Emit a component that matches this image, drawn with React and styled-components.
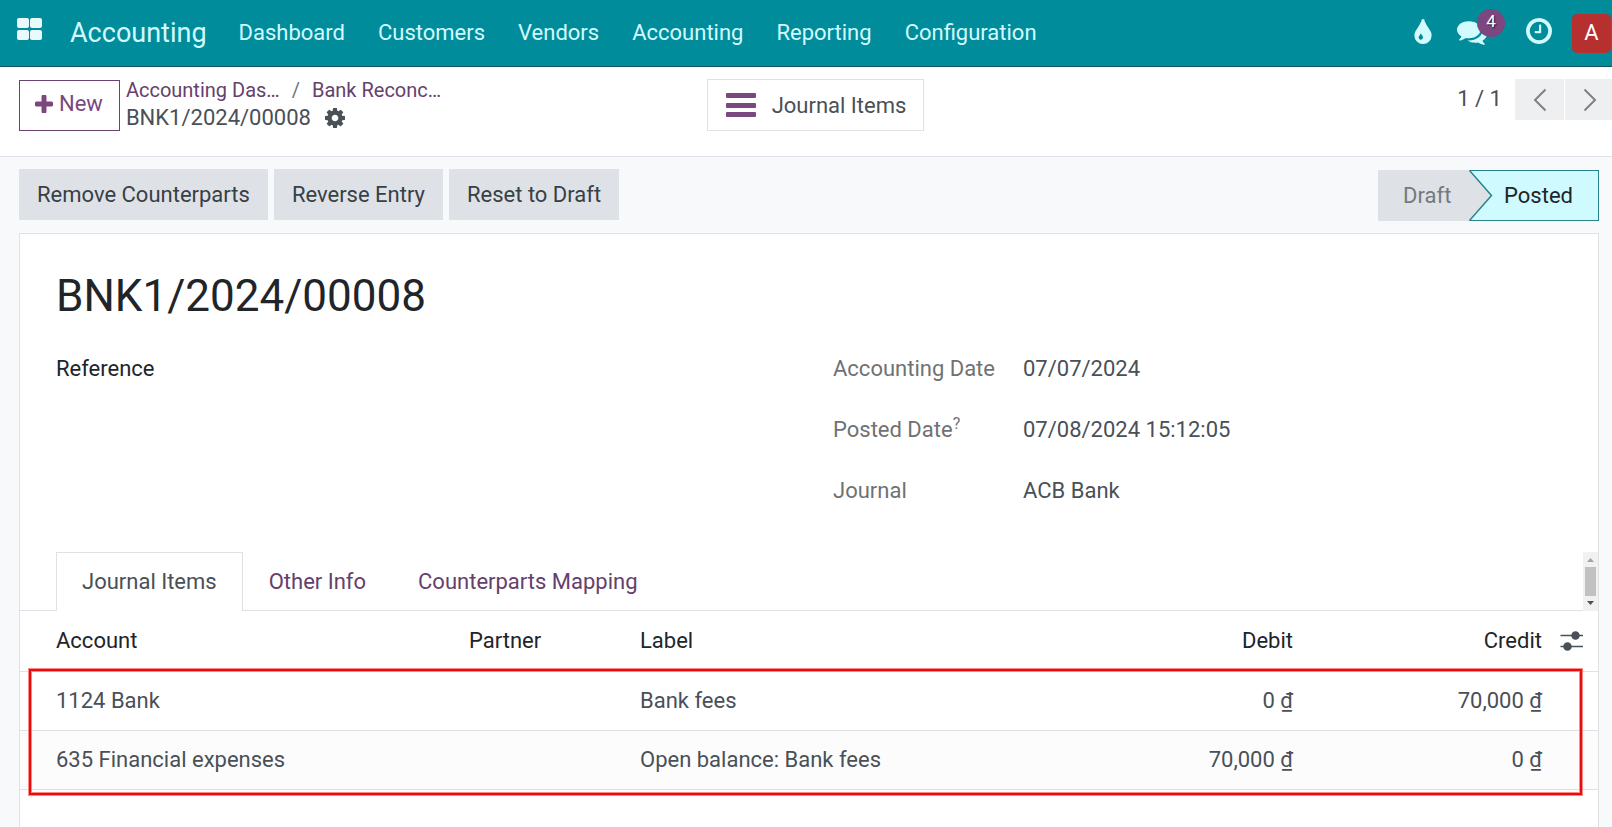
import React from 'react';
import styled, { createGlobalStyle } from 'styled-components';

const color = {
  teal: '#008c9b',
  tealDark: '#17525c',
  navText: '#d2fbff',
  purple: '#7c467f',
  link: '#66406c',
  text: '#495057',
  strong: '#212529',
  muted: '#6f7274',
  line: '#dee2e6',
  grey: '#dee2e6',
  page: '#f8f9fb',
};

const GlobalStyle = createGlobalStyle`
  *, *::before, *::after { box-sizing: border-box; }
  body {
    margin: 0;
    background: ${color.page};
    color: ${color.text};
    font-family: Roboto, "Liberation Sans", sans-serif;
    font-size: 22px;
    line-height: 26px;
  }
  button { font: inherit; color: inherit; cursor: pointer; border-radius: 0; }
  a { text-decoration: none; }
`;

const Page = styled.div`
  min-height: 100vh;
  display: flex;
  flex-direction: column;
  overflow-x: clip;
`;

/* Navigation bar */
const NavBar = styled.header`
  height: 67px;
  display: flex;
  align-items: center;
  padding-left: 16px;
  background: ${color.teal};
  border-bottom: 1px solid ${color.tealDark};
  color: ${color.navText};
`;

const IconButton = styled.button`
  position: relative;
  display: flex;
  padding: 0;
  border: 0;
  background: none;
  color: ${color.navText};
`;

const AppsButton = styled(IconButton)`
  margin-right: 27px;
  padding-bottom: 8px;
`;

const Brand = styled.a`
  font-size: 27px;
  line-height: 32px;
  color: inherit;
  margin-right: 32px;
`;

const Menu = styled.nav`
  display: flex;
  gap: 33px;
`;

const MenuLink = styled.a`
  color: inherit;
`;

const Systray = styled.div`
  margin-left: auto;
  display: flex;
  align-items: center;
  gap: 25px;
`;

const RaisedIconButton = styled(IconButton)`
  padding-bottom: 4px;
`;

const ActivityButton = styled(RaisedIconButton)`
  margin-left: 14px;
`;

const Badge = styled.span`
  position: absolute;
  top: -12px;
  left: 20px;
  width: 28px;
  height: 28px;
  border-radius: 50%;
  background: ${color.purple};
  color: #fff;
  font-size: 17px;
  line-height: 24px;
  text-align: center;
  text-shadow: 1px 1px 1px #2b1a2c;
`;

const Avatar = styled.button`
  width: 39px;
  height: 39px;
  margin-left: -5px;
  margin-right: 1px;
  padding: 0;
  border: 0;
  && { border-radius: 5px; }
  background: #b5302f;
  color: #fff;
`;

/* Control panel */
const ControlPanel = styled.div`
  height: 90px;
  display: grid;
  grid-template-columns: 1fr auto 1fr;
  align-items: start;
  padding: 12px 0 0 19px;
  background: #fff;
  border-bottom: 1px solid ${color.line};
`;

const PanelLeft = styled.div`
  display: flex;
  gap: 6px;
`;

const NewButton = styled.button`
  height: 51px;
  margin-top: 1px;
  padding: 0 16px 3px 15px;
  display: flex;
  align-items: center;
  gap: 6px;
  border: 1px solid #6c4070;
  background: #fff;
  color: ${color.purple};
`;

const Crumbs = styled.nav`
  display: flex;
  flex-direction: column;
`;

const Trail = styled.div`
  display: flex;
  gap: 12px;
  font-size: 20px;
  line-height: 22px;
  color: #6c757d;
`;

const Crumb = styled.a`
  color: ${color.link};
`;

const Current = styled.div`
  display: flex;
  align-items: center;
  gap: 14px;
  line-height: 33px;
`;

const StatButton = styled.button`
  height: 52px;
  padding: 1px 17px 0 18px;
  display: flex;
  align-items: center;
  gap: 16px;
  border: 1px solid ${color.line};
  background: #fff;
`;

const Pager = styled.div`
  display: flex;
  justify-content: flex-end;
  align-items: center;
  gap: 1px;
`;

const PagerCount = styled.span`
  margin-right: 12px;
  padding-bottom: 1px;
`;

const PagerButton = styled.button`
  width: ${(p) => p.$width}px;
  height: 41px;
  display: flex;
  align-items: center;
  padding: 0 0 0 18px;
  border: 0;
  background: #eeeff1;
  color: #7f8184;
`;

/* Form view */
const ActionBar = styled.div`
  display: flex;
  justify-content: space-between;
  padding: 12px 13px 12px 19px;
`;

const Actions = styled.div`
  display: flex;
  gap: 6px;
`;

const ActionButton = styled.button`
  height: 51px;
  padding: 0 18px;
  border: 0;
  background: ${color.grey};
  color: #374046;
`;

const StatusBar = styled.div`
  display: flex;
  height: 51px;
  margin-top: 1px;
`;

const StatusDraft = styled.button`
  width: 91px;
  padding: 0 0 0 25px;
  border: 0;
  text-align: left;
  background: ${color.grey};
  color: #74797e;
`;

const StatusPosted = styled.button`
  display: flex;
  align-items: center;
  padding: 0 25px 0 0;
  border: solid #27848c;
  border-width: 1px 1px 1px 0;
  background: #cffaff;
  color: ${color.strong};
`;

const Arrow = styled.svg`
  flex: none;
  margin: -1px 11px -1px 0;
`;

const Sheet = styled.main`
  flex: 1;
  margin: 0 13px 0 19px;
  border: 1px solid ${color.line};
  border-bottom: 0;
  background: #fff;
`;

const Title = styled.h1`
  margin: 36px 36px 16px;
  font-size: 44px;
  line-height: 52px;
  font-weight: 400;
  color: ${color.strong};
`;

const FieldColumns = styled.div`
  display: grid;
  grid-template-columns: 1fr 1fr;
  gap: 48px;
  margin: 0 36px 31px;
`;

const FieldGroup = styled.dl`
  margin: 0;
  display: grid;
  grid-template-columns: 190px 1fr;
  grid-auto-rows: 61px;
  align-items: center;
  align-content: start;
`;

const FieldLabel = styled.dt`
  color: ${(p) => (p.$strong ? color.strong : color.muted)};
`;

const FieldValue = styled.dd`
  margin: 0;
`;

const Help = styled.sup`
  font-size: 16px;
  line-height: 0;
`;

const TabBar = styled.div`
  display: flex;
  height: 59px;
  padding-left: 36px;
  box-shadow: inset 0 -1px ${color.line};
`;

const Tab = styled.button`
  padding: 0 25px;
  border: 1px solid ${(p) => (p.$active ? color.line : 'transparent')};
  border-bottom: 0;
  background: ${(p) => (p.$active ? '#fff' : 'transparent')};
  color: ${(p) => (p.$active ? color.text : color.link)};
`;

const ScrollTrack = styled.div`
  width: 15px;
  margin-left: auto;
  display: flex;
  flex-direction: column;
  align-items: center;
  background: #f1f1f1;
`;

const ScrollThumb = styled.div`
  width: 11px;
  height: 29px;
  background: #c1c1c1;
`;

const TableArea = styled.div`
  position: relative;
`;

const Table = styled.table`
  width: 100%;
  table-layout: fixed;
  border-collapse: separate;
  border-spacing: 0;
`;

const Col = styled.col`
  width: ${(p) => (p.$width ? `${p.$width}px` : 'auto')};
`;

const Th = styled.th`
  height: 61px;
  padding: 0 8px;
  border-bottom: 1px solid ${color.line};
  font-weight: 400;
  color: ${color.strong};
  text-align: ${(p) => (p.$number ? 'right' : 'left')};
  &:first-child { padding-left: 36px; }
`;

const Td = styled.td`
  height: 59px;
  padding: 0 8px;
  border-bottom: 1px solid ${color.line};
  text-align: ${(p) => (p.$number ? 'right' : 'left')};
  &:first-child { padding-left: 36px; }
  tr:nth-child(even) > & { background: #fcfcfc; }
`;

const OptionsButton = styled(IconButton)`
  color: ${color.text};
`;

/* Frame that calls out the journal lines */
const Highlight = styled.div`
  position: absolute;
  top: 58px;
  right: 16px;
  bottom: -5px;
  left: 9px;
  border: 2px solid #e80c0c;
  box-shadow: 0 0 0 1px #ff8a8a, inset 0 0 0 1px #ff8a8a;
  pointer-events: none;
`;

const glyphs = {
  plus: 'M1600 736v192q0 40-28 68t-68 28h-416v416q0 40-28 68t-68 28h-192q-40 0-68-28t-28-68v-416h-416q-40 0-68-28t-28-68v-192q0-40 28-68t68-28h416v-416q0-40 28-68t68-28h192q40 0 68 28t28 68v416h416q40 0 68 28t28 68z',
  tint: 'M896 1152q0-36-20-69-1-1-15.500-22.500t-25.500-38-25-44-21-50.500q-4-16-21-16t-21 16q-7 23-21 50.500t-25 44-25.500 38-15.500 22.500q-20 33-20 69 0 53 37.500 90.500t90.500 37.500 90.500-37.500 37.500-90.500zm512-128q0 212-150 362t-362 150-362-150-150-362q0-145 81-275 6-9 62.500-90.500t101-151 99.500-178 83-201.500q9-30 34-47t51-17 51.500 17 33.500 47q28 93 83 201.500t99.500 178 101 151 62.500 90.500q81 127 81 275z',
  comments: 'M1408 768q0 139-94 257t-256.500 186.500-353.500 68.500q-86 0-176-16-124 88-278 128-36 9-86 16h-3q-11 0-20.500-8t-11.500-21q-1-3-1-6.500t.5-6.500 2-6l2.500-5 3.500-5.500 4-5 4.500-5 4-4.500q5-6 23-25t26-29.500 22.500-29 25-38.500 20.500-44q-124-72-195-177t-71-224q0-139 94-257t256.500-186.500 353.500-68.500 353.500 68.500 256.500 186.500 94 257zm384 256q0 120-71 224.500t-195 176.500q10 24 20.500 44t25 38.500 22.500 29 26 29.500 23 25q1 1 4 4.500t4.500 5 4 5 3.500 5.500l2.500 5 2 6 .5 6.500-1 6.500q-3 14-13 22t-22 7q-50-7-86-16-154-40-278-128-90 16-176 16-271 0-472-132 58 4 88 4 161 0 309-45t264-129q125-92 192-212t67-257q0-77-23-152 129 71 204 178t75 230z',
  clock: 'M1024 544v448q0 14-9 23t-23 9h-320q-14 0-23-9t-9-23v-64q0-14 9-23t23-9h224v-352q0-14 9-23t23-9h64q14 0 23 9t9 23zm416 352q0-148-73-273t-198-198-273-73-273 73-198 198-73 273 73 273 198 198 273 73 273-73 198-198 73-273zm224 0q0 209-103 385.500t-279.500 279.500-385.500 103-385.500-103-279.500-279.500-103-385.500 103-385.500 279.500-279.500 385.500-103 385.500 103 279.500 279.500 103 385.500z',
  cog: 'M1152 896q0-106-75-181t-181-75-181 75-75 181 75 181 181 75 181-75 75-181zm512-109v222q0 12-8 23t-20 13l-185 28q-19 54-39 91 35 50 107 138 10 12 10 25t-9 23q-27 37-99 108t-94 71q-12 0-26-9l-138-108q-44 23-91 38-16 136-29 186-7 28-36 28h-222q-14 0-24.500-8.500t-11.500-21.500l-28-184q-49-16-90-37l-141 107q-10 9-25 9-14 0-25-11-126-114-165-168-7-10-7-23 0-12 8-23 15-21 51-66.500t54-70.500q-27-50-41-99l-183-27q-13-2-21-12.500t-8-23.500v-222q0-12 8-23t19-13l186-28q14-46 39-92-40-57-107-138-10-12-10-24 0-10 9-23 26-36 98.500-107.500t94.500-71.500q13 0 26 10l138 107q44-23 91-38 16-136 29-186 7-28 36-28h222q14 0 24.500 8.500t11.500 21.500l28 184q49 16 90 37l142-107q9-9 24-9 13 0 25 10 129 119 165 170 7 8 7 22 0 12-8 23-15 21-51 66.500t-54 70.500q26 50 41 98l183 28q13 2 21 12.500t8 23.500z',
};

// Each icon is cropped to its own glyph box inside the 1792-unit em.
const boxes = {
  plus: '192 128 1408 1408',
  tint: '384 0 1024 1536',
  comments: '0 256 1792 1408',
  clock: '128 128 1536 1536',
  cog: '128 128 1536 1536',
};

function Glyph({ name, width, height }) {
  return (
    <svg width={width} height={height} viewBox={boxes[name]} fill="currentColor" aria-hidden="true">
      <path d={glyphs[name]} />
    </svg>
  );
}

const menuItems = ['Dashboard', 'Customers', 'Vendors', 'Accounting', 'Reporting', 'Configuration'];

const journalRows = [
  { account: '1124 Bank', partner: '', label: 'Bank fees', debit: '0 ₫', credit: '70,000 ₫' },
  { account: '635 Financial expenses', partner: '', label: 'Open balance: Bank fees', debit: '70,000 ₫', credit: '0 ₫' },
];

export default function App() {
  return (
    <Page>
      <GlobalStyle />
      <NavBar>
        <AppsButton aria-label="Apps">
          <svg width="27" height="22" viewBox="0 0 27 22" fill="#e8fafb" aria-hidden="true">
            <rect x="1" y="0" width="12" height="10" rx="2" />
            <rect x="14" y="0" width="12" height="10" rx="2" />
            <rect x="1" y="12" width="12" height="10" rx="2" />
            <rect x="14" y="12" width="12" height="10" rx="2" />
          </svg>
        </AppsButton>
        <Brand href="#">Accounting</Brand>
        <Menu>
          {menuItems.map((item) => (
            <MenuLink key={item} href="#">{item}</MenuLink>
          ))}
        </Menu>
        <Systray>
          <RaisedIconButton aria-label="Theme"><Glyph name="tint" width={18} height={26} /></RaisedIconButton>
          <IconButton aria-label="Messages">
            <Glyph name="comments" width={30} height={24} />
            <Badge>4</Badge>
          </IconButton>
          <ActivityButton aria-label="Activities"><Glyph name="clock" width={26} height={26} /></ActivityButton>
          <Avatar aria-label="User menu">A</Avatar>
        </Systray>
      </NavBar>

      <ControlPanel>
        <PanelLeft>
          <NewButton><Glyph name="plus" width={18} height={18} />New</NewButton>
          <Crumbs aria-label="Breadcrumb">
            <Trail>
              <Crumb href="#">Accounting Das…</Crumb>
              <span>/</span>
              <Crumb href="#">Bank Reconc…</Crumb>
            </Trail>
            <Current>
              <span>BNK1/2024/00008</span>
              <OptionsButton aria-label="Actions"><Glyph name="cog" width={20} height={20} /></OptionsButton>
            </Current>
          </Crumbs>
        </PanelLeft>
        <StatButton>
          <svg width="30" height="26" viewBox="0 0 30 26" fill={color.purple} aria-hidden="true">
            <rect y="0" width="30" height="5" rx="1" />
            <rect y="10" width="30" height="5" rx="1" />
            <rect y="19" width="30" height="5" rx="1" />
          </svg>
          Journal Items
        </StatButton>
        <Pager>
          <PagerCount>1 / 1</PagerCount>
          <PagerButton aria-label="Previous" $width={49}>
            <svg width="14" height="24" viewBox="0 0 14 24" fill="none" stroke="currentColor" strokeWidth="2" aria-hidden="true">
              <path d="M12.500 1.500 2 12l10.500 10.500" />
            </svg>
          </PagerButton>
          <PagerButton aria-label="Next" $width={47}>
            <svg width="14" height="24" viewBox="0 0 14 24" fill="none" stroke="currentColor" strokeWidth="2" aria-hidden="true">
              <path d="M1.500 1.500 12 12 1.500 22.500" />
            </svg>
          </PagerButton>
        </Pager>
      </ControlPanel>

      <ActionBar>
        <Actions>
          <ActionButton>Remove Counterparts</ActionButton>
          <ActionButton>Reverse Entry</ActionButton>
          <ActionButton>Reset to Draft</ActionButton>
        </Actions>
        <StatusBar>
          <StatusDraft>Draft</StatusDraft>
          <StatusPosted aria-current="step">
            <Arrow width="24" height="51" viewBox="0 0 24 51" aria-hidden="true">
              <path d="M0 0 22.500 25.500 0 51z" fill={color.grey} />
              <path d="M0.500 0.500 22.500 25.500 0.500 50.500" fill="none" stroke="#27848c" strokeWidth="1.500" />
            </Arrow>
            Posted
          </StatusPosted>
        </StatusBar>
      </ActionBar>

      <Sheet>
        <Title>BNK1/2024/00008</Title>
        <FieldColumns>
          <FieldGroup>
            <FieldLabel $strong>Reference</FieldLabel>
            <FieldValue />
          </FieldGroup>
          <FieldGroup>
            <FieldLabel>Accounting Date</FieldLabel>
            <FieldValue>07/07/2024</FieldValue>
            <FieldLabel>Posted Date<Help>?</Help></FieldLabel>
            <FieldValue>07/08/2024 15:12:05</FieldValue>
            <FieldLabel>Journal</FieldLabel>
            <FieldValue>ACB Bank</FieldValue>
          </FieldGroup>
        </FieldColumns>

        <TabBar role="tablist">
          <Tab role="tab" aria-selected="true" $active>Journal Items</Tab>
          <Tab role="tab" aria-selected="false">Other Info</Tab>
          <Tab role="tab" aria-selected="false">Counterparts Mapping</Tab>
          <ScrollTrack aria-hidden="true">
            <svg width="15" height="15" viewBox="0 0 15 15"><path d="M4 10h7L7.500 6z" fill="#a3a3a3" /></svg>
            <ScrollThumb />
            <svg width="15" height="15" viewBox="0 0 15 15"><path d="M4 5h7L7.500 9z" fill="#505050" /></svg>
          </ScrollTrack>
        </TabBar>

        <TableArea>
          <Table>
            <colgroup>
              <Col $width={441} />
              <Col $width={171} />
              <Col />
              <Col $width={248} />
              <Col $width={249} />
              <Col $width={48} />
            </colgroup>
            <thead>
              <tr>
                <Th>Account</Th>
                <Th>Partner</Th>
                <Th>Label</Th>
                <Th $number>Debit</Th>
                <Th $number>Credit</Th>
                <Th>
                  <OptionsButton aria-label="Optional columns">
                    <svg width="26" height="20" viewBox="0 0 26 20" stroke="currentColor" strokeWidth="1.500" fill="currentColor" aria-hidden="true">
                      <path d="M2.500 4.500H25M2.500 15.500H25" />
                      <circle cx="17.500" cy="4.500" r="3.500" />
                      <circle cx="9.500" cy="15.500" r="3.500" />
                    </svg>
                  </OptionsButton>
                </Th>
              </tr>
            </thead>
            <tbody>
              {journalRows.map((row) => (
                <tr key={row.account}>
                  <Td>{row.account}</Td>
                  <Td>{row.partner}</Td>
                  <Td>{row.label}</Td>
                  <Td $number>{row.debit}</Td>
                  <Td $number>{row.credit}</Td>
                  <Td />
                </tr>
              ))}
            </tbody>
          </Table>
          <Highlight />
        </TableArea>
      </Sheet>
    </Page>
  );
}
